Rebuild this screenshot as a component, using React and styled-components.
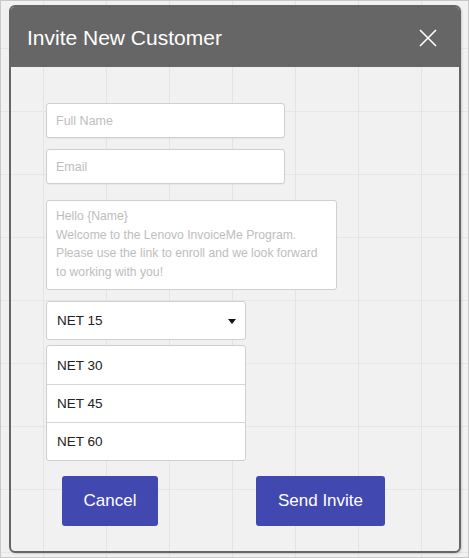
import styled, { createGlobalStyle } from "styled-components";

const GlobalStyle = createGlobalStyle`
  html, body {
    margin: 0;
    padding: 0;
  }
  body {
    font-family: "Liberation Sans", Arial, sans-serif;
  }
  * {
    box-sizing: border-box;
  }
`;

const Page = styled.div`
  width: 469px;
  height: 558px;
  border: 1px solid #c8c8c8;
  background-color: #f1f1f1;
  background-image: linear-gradient(to right, #e4e4e4 1px, transparent 1px),
    linear-gradient(to bottom, #e6e6e6 1px, transparent 1px);
  background-size: 63px 63px;
  background-position: 42px 47px;
  padding: 4px 0 0 8px;
`;

const Dialog = styled.section`
  width: 452px;
  height: 548px;
  border-radius: 6px;
  border: 2px solid #656565;
  display: flex;
  flex-direction: column;
  overflow: hidden;
  box-shadow: 1px 1px 2px rgba(0, 0, 0, 0.15);
`;

const Header = styled.header`
  height: 60px;
  flex-shrink: 0;
  background-color: #666666;
  display: flex;
  align-items: center;
  justify-content: space-between;
  padding: 0 22px 0 16px;
`;

const Title = styled.h2`
  margin: 0;
  font-size: 21px;
  font-weight: normal;
  color: #ffffff;
  padding-top: 2px;
`;

const CloseButton = styled.button`
  background: none;
  border: none;
  padding: 0;
  width: 18px;
  height: 18px;
  display: flex;
  cursor: pointer;
  margin-top: 2px;
`;

const Body = styled.div`
  flex: 1;
  display: flex;
  flex-direction: column;
  align-items: flex-start;
  padding: 36px 0 0 35px;
`;

const TextInput = styled.input`
  width: 239px;
  height: 35px;
  border: 1px solid #cfcfcf;
  border-radius: 3px;
  background: #ffffff;
  padding: 0 9px;
  font-family: "Liberation Sans", Arial, sans-serif;
  font-size: 12.5px;
  color: #333;
  margin-bottom: ${(p) => p.$gap || 11}px;
  box-shadow: 0 1px 1px rgba(0, 0, 0, 0.04);
  &::placeholder {
    color: #bdbdbd;
  }
`;

const Message = styled.textarea`
  width: 291px;
  height: 90px;
  border: 1px solid #cfcfcf;
  border-radius: 3px;
  background: #ffffff;
  padding: 6px 9px;
  font-family: "Liberation Sans", Arial, sans-serif;
  font-size: 12.2px;
  line-height: 18.5px;
  resize: none;
  margin-bottom: 11px;
  &::placeholder {
    color: #bdbdbd;
  }
`;

const Select = styled.div`
  width: 200px;
  height: 39px;
  border: 1px solid #cfcfcf;
  border-radius: 3px;
  background: #ffffff;
  display: flex;
  align-items: center;
  justify-content: space-between;
  padding: 0 9px 0 10px;
  font-size: 13.5px;
  color: #222;
  margin-bottom: 5px;
`;

const Caret = styled.span`
  width: 0;
  height: 0;
  border-left: 4px solid transparent;
  border-right: 4px solid transparent;
  border-top: 5px solid #111;
  margin-top: 2px;
`;

const OptionList = styled.ul`
  list-style: none;
  margin: 0 0 15px 0;
  padding: 0;
  width: 200px;
  border: 1px solid #cfcfcf;
  border-radius: 3px;
  background: #ffffff;
`;

const Option = styled.li`
  height: 38px;
  display: flex;
  align-items: center;
  padding: 0 10px;
  font-size: 13.5px;
  color: #222;
  & + & {
    border-top: 1px solid #d6d6d6;
  }
`;

const Actions = styled.div`
  display: flex;
  gap: 98px;
  padding-left: 16px;
`;

const Button = styled.button`
  width: ${(p) => p.$width}px;
  height: 50px;
  border: none;
  border-radius: 3px;
  background-color: #4148b0;
  color: #ffffff;
  font-family: "Liberation Sans", Arial, sans-serif;
  font-size: 17px;
  cursor: pointer;
`;

const CloseIcon = () => (
  <svg width="18" height="18" viewBox="0 0 18 18">
    <path d="M1 1 L17 17 M17 1 L1 17" stroke="#ffffff" strokeWidth="1.6" />
  </svg>
);

const terms = ["NET 30", "NET 45", "NET 60"];

const App = () => {
  return (
    <>
      <GlobalStyle />
      <Page>
        <Dialog>
          <Header>
            <Title>Invite New Customer</Title>
            <CloseButton aria-label="Close">
              <CloseIcon />
            </CloseButton>
          </Header>
          <Body>
            <TextInput placeholder="Full Name" />
            <TextInput placeholder="Email" $gap={16} />
            <Message
              placeholder={
                "Hello {Name}\nWelcome to the Lenovo InvoiceMe Program.\nPlease use the link to enroll and we look forward\nto working with you!"
              }
            />
            <Select>
              <span>NET 15</span>
              <Caret />
            </Select>
            <OptionList>
              {terms.map((t) => (
                <Option key={t}>{t}</Option>
              ))}
            </OptionList>
            <Actions>
              <Button $width={96}>Cancel</Button>
              <Button $width={129}>Send Invite</Button>
            </Actions>
          </Body>
        </Dialog>
      </Page>
    </>
  );
};

export default App;
